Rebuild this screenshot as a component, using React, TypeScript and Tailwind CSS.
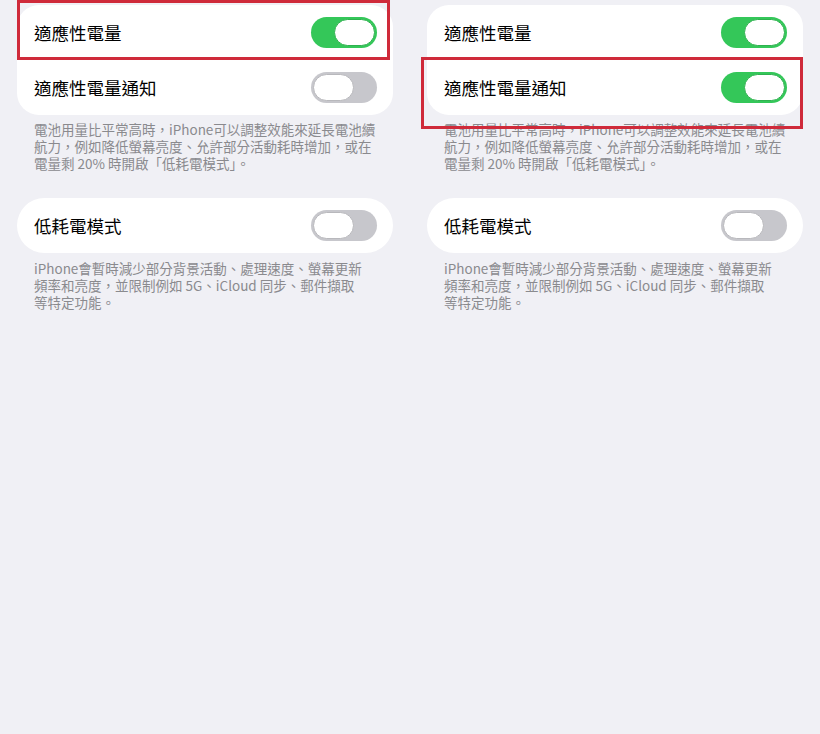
import React from 'react'

const FONT = '"Noto Sans CJK TC", "Noto Sans", Inter, sans-serif'

const Toggle: React.FC<{ on: boolean }> = ({ on }) => (
  <div
    className={`relative w-[66px] h-[31px] rounded-full flex items-center px-[2px] ${on ? 'bg-[#34c759] justify-end' : 'bg-[#c7c7cc] justify-start'}`}
  >
    <div
      className={`w-[41px] h-[27px] rounded-full bg-white border ${on ? 'border-[#2fb14f]' : 'border-[#b8b8bc]'}`}
    />
  </div>
)

const Row: React.FC<{ label: string; on: boolean; children?: React.ReactNode }> = ({ label, on, children }) => (
  <div className="relative h-[55px] flex items-center justify-between pl-[17px] pr-[16px]">
    <span className="text-[17.5px] text-black leading-none">{label}</span>
    <Toggle on={on} />
    {children}
  </div>
)

const Note: React.FC<{ lines: string[]; className?: string }> = ({ lines, className }) => (
  <div className={`pl-[17px] text-[13.5px] leading-[17px] text-[#8a8a8e] ${className ?? ''}`}>
    {lines.map((l, i) => (
      <div key={i} className="whitespace-nowrap">{l}</div>
    ))}
  </div>
)

const Panel: React.FC<{ highlight: 'first' | 'second' }> = ({ highlight }) => (
  <div className="w-[410px] h-full px-[17px] pt-[5px]">
    <div className="bg-white rounded-[22px]">
      <Row label="適應性電量" on>
        {highlight === 'first' && (
          <div className="absolute -top-[5px] bottom-0 left-0 right-[3px] border-[3px] border-[#cf2a3a] pointer-events-none" />
        )}
      </Row>
      <Row label="適應性電量通知" on={highlight === 'second'}>
        {highlight === 'second' && (
          <div className="absolute -top-[3px] -bottom-[14px] -left-[6px] right-0 border-[3px] border-[#cf2a3a] pointer-events-none" />
        )}
      </Row>
    </div>
    <Note
      className="mt-[6px]"
      lines={[
        '電池用量比平常高時，iPhone可以調整效能來延長電池續',
        '航力，例如降低螢幕亮度、允許部分活動耗時增加，或在',
        '電量剩 20% 時開啟「低耗電模式」。',
      ]}
    />
    <div className="mt-[26px] bg-white rounded-[28px]">
      <Row label="低耗電模式" on={false} />
    </div>
    <Note
      className="mt-[7px]"
      lines={[
        'iPhone會暫時減少部分背景活動、處理速度、螢幕更新',
        '頻率和亮度，並限制例如 5G、iCloud 同步、郵件擷取',
        '等特定功能。',
      ]}
    />
  </div>
)

export default function App() {
  return (
    <div className="w-[820px] h-[734px] bg-[#f0f0f5] flex overflow-hidden" style={{ fontFamily: FONT }}>
      <Panel highlight="first" />
      <Panel highlight="second" />
    </div>
  )
}
